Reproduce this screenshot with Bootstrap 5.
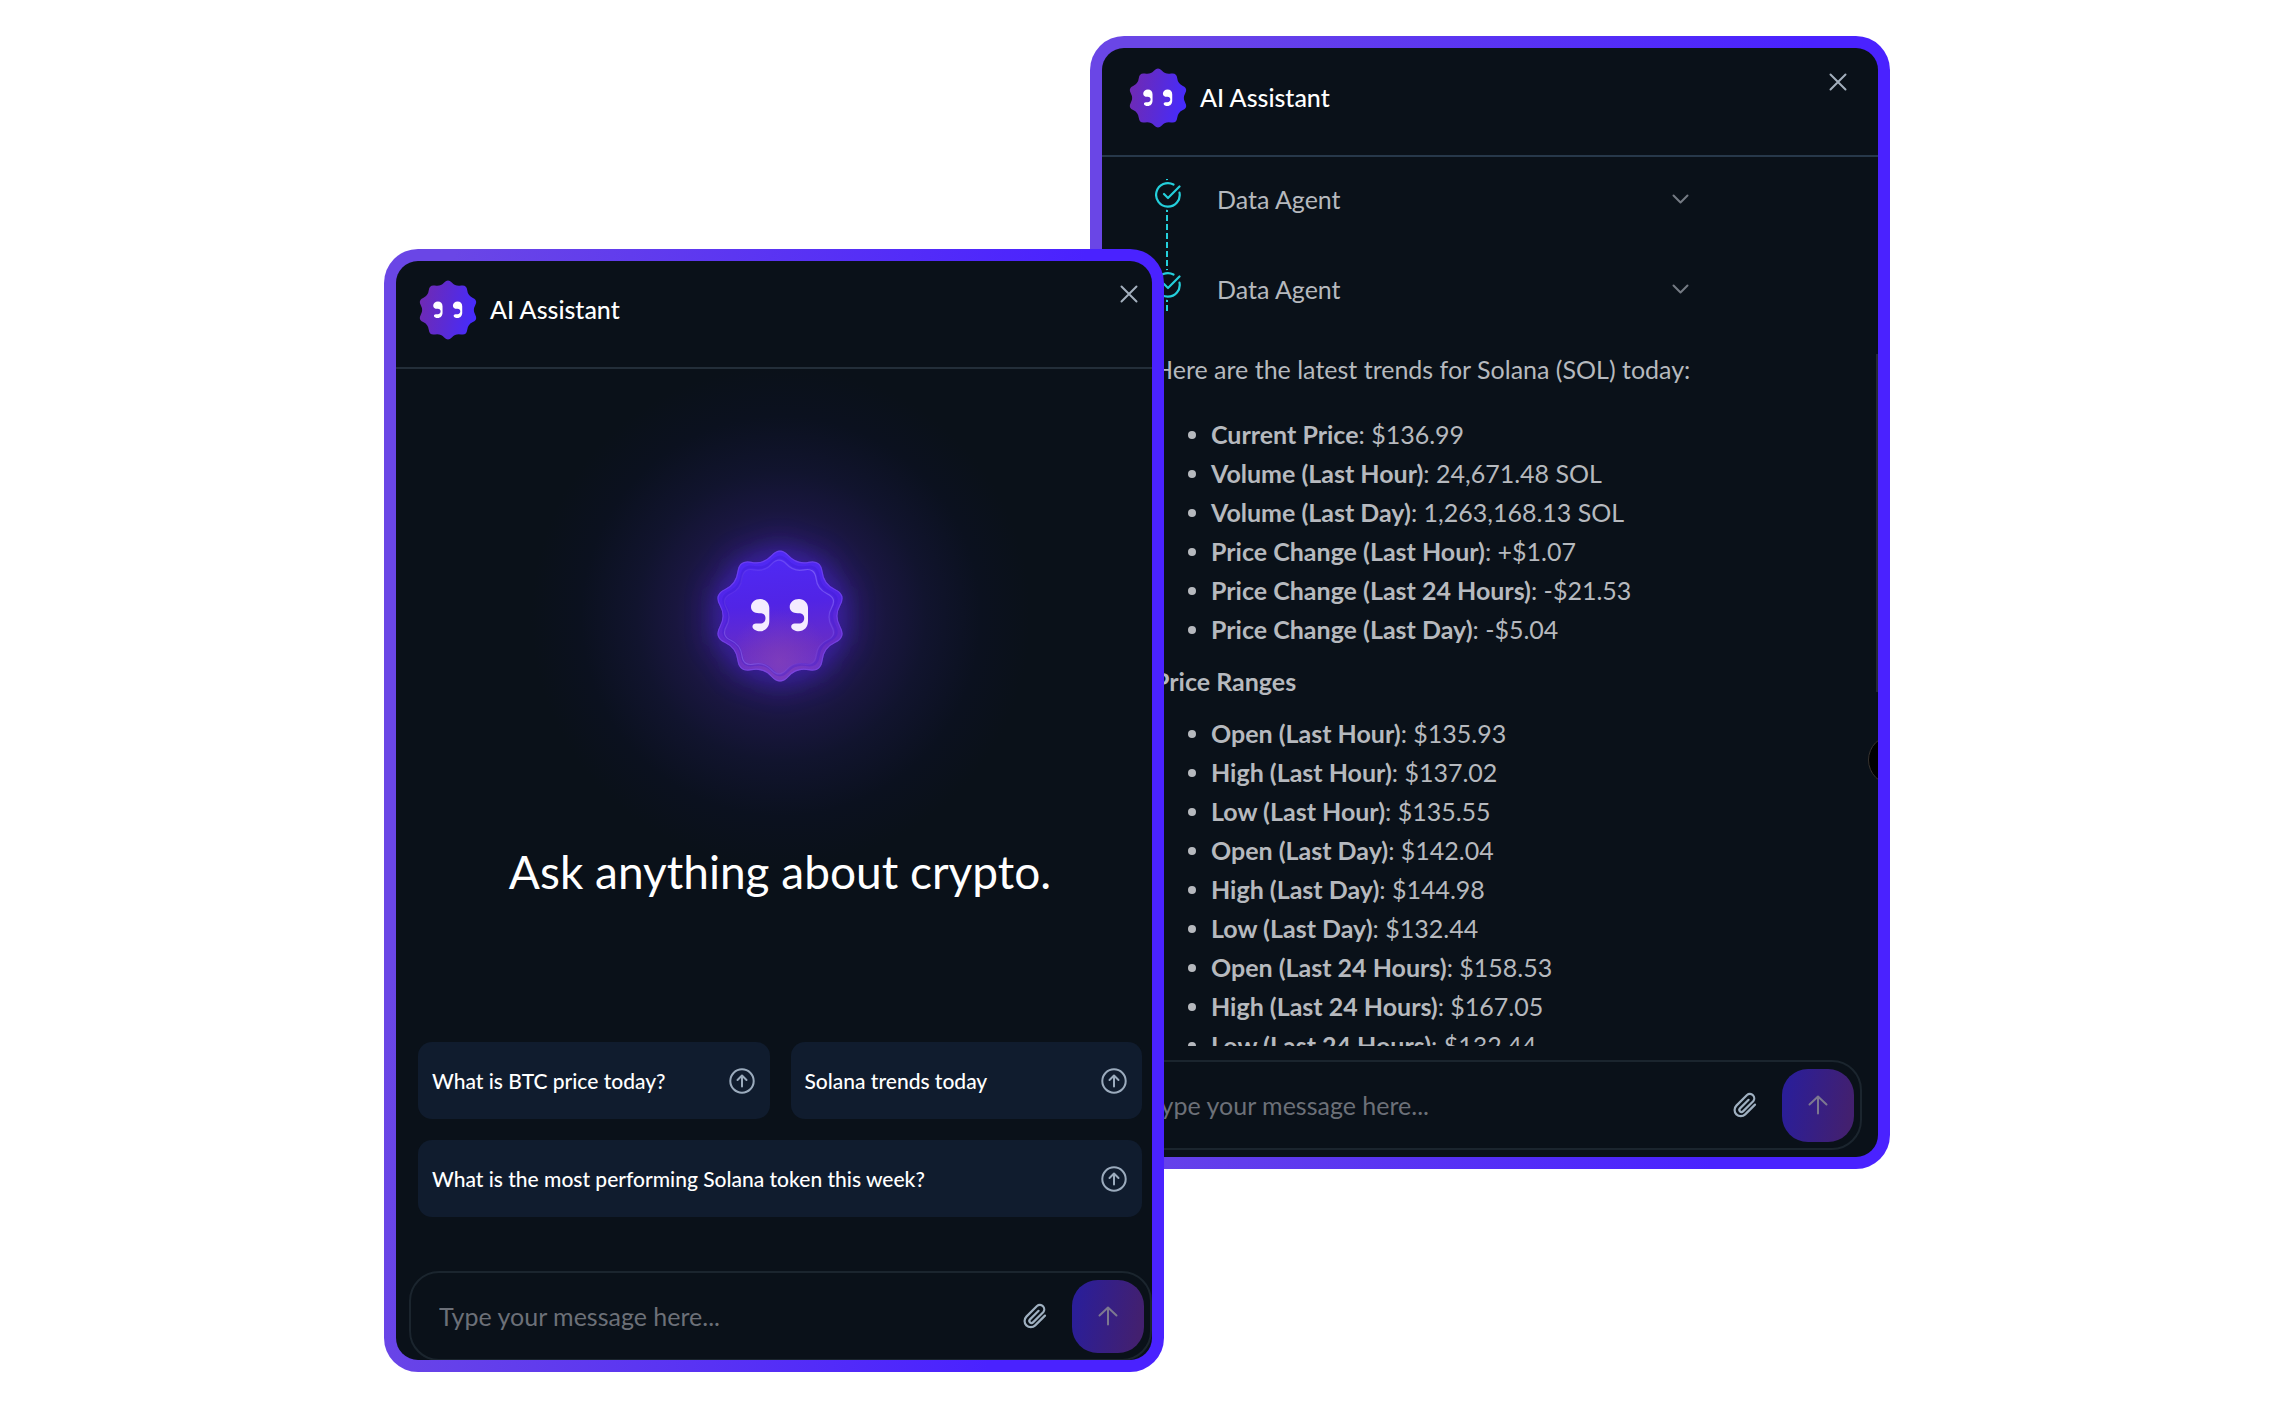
<!DOCTYPE html>
<html lang="en">
<head>
<meta charset="utf-8">
<meta name="viewport" content="width=device-width, initial-scale=1">
<title>AI Assistant</title>
<link href="https://cdn.jsdelivr.net/npm/bootstrap@5.3.0/dist/css/bootstrap.min.css" rel="stylesheet">
<style>
  :root { --ink: #0a1119; --line: #24303c; --soft: #b6b9be; --cyan: #24cfdb; }
  body { background: #fff; font-family: Lato, "Open Sans", sans-serif; font-size: 25px; line-height: 39px; color: var(--soft); }
  .stage { padding: 36px 16px 36px 18px; }
  .window { flex: 0 1 780px; min-width: 0; padding: 12px; border-radius: 34px; background: linear-gradient(95deg, #6a46e6 8%, #4a22ff 80%); }
  .window-front { margin-top: 213px; z-index: 2; position: relative; }
  .window-back { flex-basis: 800px; margin-left: -74px; }
  .screen { background: var(--ink); border-radius: 22px; overflow: hidden; }
  .top-bar { height: 108px; padding: 19px 14px 0 22px; border-bottom: 2px solid #232e39; }
  .window-back .top-bar { height: 109px; padding: 20px 31px 0 26px; border-color: #27384a; }
  .brand-title { line-height: 58px; color: #fff; font-weight: 500; }
  .close-btn { width: 18px; height: 18px; margin-top: 5px; color: #a3afbd; }
  .icon-btn { border: 0; background: none; padding: 0; display: flex; align-items: center; justify-content: center; }
  .welcome { padding: 177px 10px 54px 22px; background: radial-gradient(circle at 385px 247px, #34208c 0, #2c1d78 52px, #211954 78px, #19163f 105px, #11142e 145px, #0b111f 200px, rgba(10,17,25,0) 250px); }
  .welcome h1 { margin: 158px 0 142px; font-size: 46px; line-height: 56px; font-weight: 400; color: #fff; }
  .prompts { display: grid; grid-template-columns: 1fr 1fr; gap: 21px; }
  .prompt-btn { height: 77px; border: 0; border-radius: 14px; padding: 0 15px 0 14px; background: #101c2e; color: #fff; font-size: 21px; line-height: 28px; font-weight: 500; }
  .prompt-btn svg { color: #9babbd; flex: none; }
  .prompt-wide { grid-column: 1 / -1; }
  .composer { height: 90px; margin: 0 0 -1px 13px; padding: 0 6px 0 28px; border: 2px solid #1b252e; border-radius: 30px; }
  .window-back .composer { margin: 14px 16px 7px 16px; }
  .composer input { flex: 1 1 auto; min-width: 0; height: 60px; border: 0; outline: 0; background: none; color: #fff; padding: 0; }
  .composer input::placeholder { color: #6c7078; opacity: 1; }
  .attach-btn { width: 28px; color: #9fb0c0; margin-right: 23px; }
  .send-btn { width: 72px; height: 73px; border-radius: 26px; color: #7d7890; background: linear-gradient(100deg, #2b1e98 10%, #43206f 90%); }
  .chat { position: relative; }
  .chat-scroll { max-height: 889px; overflow: hidden; padding: 22px 52px 0; }
  .chat::before { content: ""; position: absolute; right: 0; top: 197px; width: 2px; height: 338px; background: #252a35; }
  .chat::after { content: ""; position: absolute; right: -40px; top: 578px; width: 50px; height: 50px; border-radius: 50%; background: #000; border: 1px solid #37332f; }
  .steps { margin: 0 0 37px; padding-left: 1px; background: repeating-linear-gradient(var(--cyan) 0 6px, transparent 6px 9px) 12px 0 / 2px 100% no-repeat; }
  .steps li { height: 90px; display: flex; align-items: flex-start; gap: 36px; }
  .steps li:last-child { height: 44px; }
  .step-mark { flex: none; margin-top: 1px; color: var(--cyan); }
  .step-btn { flex: 0 1 472px; justify-content: space-between; height: 40px; color: var(--soft); }
  .step-btn svg { color: #747a83; }
  .chat p { margin: 0; }
  .facts { margin: 26px 0 13px; padding-left: 57px; list-style: none; }
  .facts li { position: relative; }
  .facts li::before { content: ""; position: absolute; left: -23px; top: 16px; width: 8px; height: 8px; border-radius: 50%; background: var(--soft); }
  .facts-next { margin-top: 13px; }
</style>
</head>
<body>
<svg width="0" height="0" class="position-absolute" aria-hidden="true">
  <defs>
    <path id="seal" d="M-8.4-60.9Q0-70 8.4-60.9Q16.8-51.7 29-54.2Q41.1-56.6 42.6-44.3Q44-32 55.3-26.8Q66.6-21.6 60.5-10.8Q54.4 0 60.5 10.8Q66.6 21.6 55.3 26.8Q44 32 42.6 44.3Q41.1 56.6 29 54.2Q16.8 51.7 8.4 60.9Q0 70-8.4 60.9Q-16.8 51.7-29 54.2Q-41.1 56.6-42.6 44.3Q-44 32-55.3 26.8Q-66.6 21.6-60.5 10.8Q-54.4 0-60.5-10.8Q-66.6-21.6-55.3-26.8Q-44-32-42.6-44.3Q-41.1-56.6-29-54.2Q-16.8-51.7-8.4-60.9Z"/>
    <path id="eye" d="M9.3 0C14.5 0 18.3 4 18.3 9V22C18.3 28 14.5 32.3 8.8 32.3C5.5 32.3 2 30.5 1.5 28C1.2 26 3 24.6 5 24.6H9C12.500 24.6 14.5 22.5 14.5 19C14.5 16 12.500 14.2 9 14.2H8C3 14.2 0 11.5 0 8C0 3.5 4 0 9.3 0Z"/>
    <linearGradient id="sealSmall" x1="0" y1="0.4" x2="1" y2="0.6"><stop offset="0" stop-color="#6f2ab4"/><stop offset=".5" stop-color="#5a2bd6"/><stop offset="1" stop-color="#452bff"/></linearGradient>
    <linearGradient id="sealBig" x1="0.45" y1="0" x2="0.55" y2="1"><stop offset="0" stop-color="#4f2af6"/><stop offset=".4" stop-color="#5124e6"/><stop offset=".75" stop-color="#672dc6"/><stop offset="1" stop-color="#6c35cc"/></linearGradient>
    <linearGradient id="rimA" x1="0" y1="1" x2="1" y2="0"><stop offset="0" stop-color="#a98af0" stop-opacity=".8"/><stop offset=".35" stop-color="#7c4ee8" stop-opacity=".2"/><stop offset=".65" stop-color="#7c5cf4" stop-opacity=".3"/><stop offset="1" stop-color="#a08cff" stop-opacity=".8"/></linearGradient>
    <radialGradient id="blush" cx=".5" cy=".85" r=".4"><stop offset="0" stop-color="#8a44b4" stop-opacity=".6"/><stop offset="1" stop-color="#8a44b4" stop-opacity="0"/></radialGradient>
    <g id="logo">
      <use href="#seal" transform="scale(.45)" fill="url(#sealSmall)"/>
      <g fill="#fff"><use href="#eye" transform="translate(-14.8 -8.4) scale(.51)"/><use href="#eye" transform="translate(4.9 -8.4) scale(.51)"/></g>
    </g>
    <g id="cross"><path d="M1.5 1.5l15 15m0-15l-15 15" fill="none" stroke="currentColor" stroke-width="2" stroke-linecap="round"/></g>
    <g id="clip"><path d="M24 13.6 14.2 23.4a6.2 6.2 0 0 1-8.8-8.8L16 4a4.4 4.4 0 0 1 6.2 6.2L12 20.4a2.1 2.1 0 0 1-3-3L17.6 8.8" fill="none" stroke="currentColor" stroke-width="2.2" stroke-linecap="round" stroke-linejoin="round"/></g>
    <g id="arrowUp"><path d="M10 18.500V1.500M1.500 9.500L10 1.500l8.500 8" fill="none" stroke="currentColor" stroke-width="2" stroke-linecap="round" stroke-linejoin="round"/></g>
    <g id="ringUp" fill="none" stroke="currentColor" stroke-width="2" stroke-linecap="round" stroke-linejoin="round"><circle cx="13" cy="13" r="11.700"/><path d="M13 18.500V8M8.500 12L13 7.500l4.500 4.500"/></g>
    <g id="tick" stroke="currentColor" stroke-width="2.2" stroke-linecap="round" stroke-linejoin="round"><circle cx="13" cy="15" r="15" fill="#0a1119" stroke="none"/><path d="M24.500 12.600A11.800 11.800 0 1 1 18.500 4.500" fill="none"/><path d="M9 14l4 4L24.500 6.500" fill="none"/></g>
    <g id="down"><path d="M1.500 1.500l7 7 7-7" fill="none" stroke="currentColor" stroke-width="2" stroke-linecap="round" stroke-linejoin="round"/></g>
  </defs>
</svg>

<main class="stage d-flex justify-content-center align-items-start">
  <section class="window window-front" aria-label="AI Assistant start">
    <div class="screen">
      <header class="top-bar d-flex align-items-start justify-content-between">
        <div class="d-flex align-items-start gap-2">
          <svg width="60" height="60" viewBox="-30 -30 60 60" aria-hidden="true"><use href="#logo"/></svg>
          <span class="brand-title ps-1">AI Assistant</span>
        </div>
        <button type="button" class="icon-btn close-btn" aria-label="Close"><svg width="18" height="18" aria-hidden="true"><use href="#cross"/></svg></button>
      </header>
      <div class="welcome text-center">
        <svg class="d-block mx-auto" width="140" height="140" viewBox="-70 -70 140 140" overflow="visible" aria-hidden="true">
          <defs><filter id="halo" x="-60%" y="-60%" width="220%" height="220%"><feGaussianBlur stdDeviation="14"/></filter></defs>
          <use href="#seal" fill="#4a22c8" opacity=".6" filter="url(#halo)" transform="scale(1.05)"/>
          <use href="#seal" fill="url(#sealBig)"/>
          <use href="#seal" fill="url(#blush)"/>
          <use href="#seal" fill="none" stroke="#7d4cf0" stroke-opacity=".6" stroke-width="1.200" transform="scale(.99)"/>
          <use href="#seal" fill="none" stroke="#3a1ad0" stroke-opacity=".3" stroke-width="3" transform="scale(.9)"/>
          <use href="#seal" fill="none" stroke="url(#rimA)" stroke-width="1.400" transform="translate(-1 1) scale(.87)"/>
          <g fill="#f4ecff"><use href="#eye" x="-29" y="-17"/><use href="#eye" x="9.700" y="-17"/></g>
        </svg>
        <h1>Ask anything about crypto.</h1>
        <div class="prompts">
          <button type="button" class="prompt-btn d-flex align-items-center justify-content-between"><span>What is BTC price today?</span><svg width="26" height="26" aria-hidden="true"><use href="#ringUp"/></svg></button>
          <button type="button" class="prompt-btn d-flex align-items-center justify-content-between"><span>Solana trends today</span><svg width="26" height="26" aria-hidden="true"><use href="#ringUp"/></svg></button>
          <button type="button" class="prompt-btn prompt-wide d-flex align-items-center justify-content-between"><span>What is the most performing Solana token this week?</span><svg width="26" height="26" aria-hidden="true"><use href="#ringUp"/></svg></button>
        </div>
      </div>
      <form class="composer d-flex align-items-center">
        <label class="visually-hidden" for="msgFront">Message</label>
        <input id="msgFront" type="text" placeholder="Type your message here...">
        <button type="button" class="icon-btn attach-btn" aria-label="Attach file"><svg width="28" height="28" aria-hidden="true"><use href="#clip"/></svg></button>
        <button type="submit" class="icon-btn send-btn" aria-label="Send"><svg width="20" height="20" aria-hidden="true"><use href="#arrowUp"/></svg></button>
      </form>
    </div>
  </section>

  <section class="window window-back" aria-label="AI Assistant chat">
    <div class="screen">
      <header class="top-bar d-flex align-items-start justify-content-between">
        <div class="d-flex align-items-start gap-2">
          <svg width="60" height="60" viewBox="-30 -30 60 60" aria-hidden="true"><use href="#logo"/></svg>
          <span class="brand-title ps-1">AI Assistant</span>
        </div>
        <button type="button" class="icon-btn close-btn" aria-label="Close"><svg width="18" height="18" aria-hidden="true"><use href="#cross"/></svg></button>
      </header>
      <div class="chat">
        <div class="chat-scroll">
          <ol class="steps list-unstyled">
            <li><svg class="step-mark" width="26" height="30" aria-hidden="true"><use href="#tick"/></svg><button type="button" class="icon-btn step-btn" aria-expanded="false"><span>Data Agent</span><svg width="17" height="10" aria-hidden="true"><use href="#down"/></svg></button></li>
            <li><svg class="step-mark" width="26" height="30" aria-hidden="true"><use href="#tick"/></svg><button type="button" class="icon-btn step-btn" aria-expanded="false"><span>Data Agent</span><svg width="17" height="10" aria-hidden="true"><use href="#down"/></svg></button></li>
          </ol>
          <p>Here are the latest trends for Solana (SOL) today:</p>
          <ul class="facts">
            <li><strong>Current Price</strong>: $136.99</li>
            <li><strong>Volume (Last Hour)</strong>: 24,671.48 SOL</li>
            <li><strong>Volume (Last Day)</strong>: 1,263,168.13 SOL</li>
            <li><strong>Price Change (Last Hour)</strong>: +$1.07</li>
            <li><strong>Price Change (Last 24 Hours)</strong>: -$21.53</li>
            <li><strong>Price Change (Last Day)</strong>: -$5.04</li>
          </ul>
          <p><strong>Price Ranges</strong></p>
          <ul class="facts facts-next">
            <li><strong>Open (Last Hour)</strong>: $135.93</li>
            <li><strong>High (Last Hour)</strong>: $137.02</li>
            <li><strong>Low (Last Hour)</strong>: $135.55</li>
            <li><strong>Open (Last Day)</strong>: $142.04</li>
            <li><strong>High (Last Day)</strong>: $144.98</li>
            <li><strong>Low (Last Day)</strong>: $132.44</li>
            <li><strong>Open (Last 24 Hours)</strong>: $158.53</li>
            <li><strong>High (Last 24 Hours)</strong>: $167.05</li>
            <li><strong>Low (Last 24 Hours)</strong>: $132.44</li>
          </ul>
        </div>
      </div>
      <form class="composer d-flex align-items-center">
        <label class="visually-hidden" for="msgBack">Message</label>
        <input id="msgBack" type="text" placeholder="Type your message here...">
        <button type="button" class="icon-btn attach-btn" aria-label="Attach file"><svg width="28" height="28" aria-hidden="true"><use href="#clip"/></svg></button>
        <button type="submit" class="icon-btn send-btn" aria-label="Send"><svg width="20" height="20" aria-hidden="true"><use href="#arrowUp"/></svg></button>
      </form>
    </div>
  </section>
</main>
<script src="https://cdn.jsdelivr.net/npm/bootstrap@5.3.0/dist/js/bootstrap.bundle.min.js"></script>
</body>
</html>
